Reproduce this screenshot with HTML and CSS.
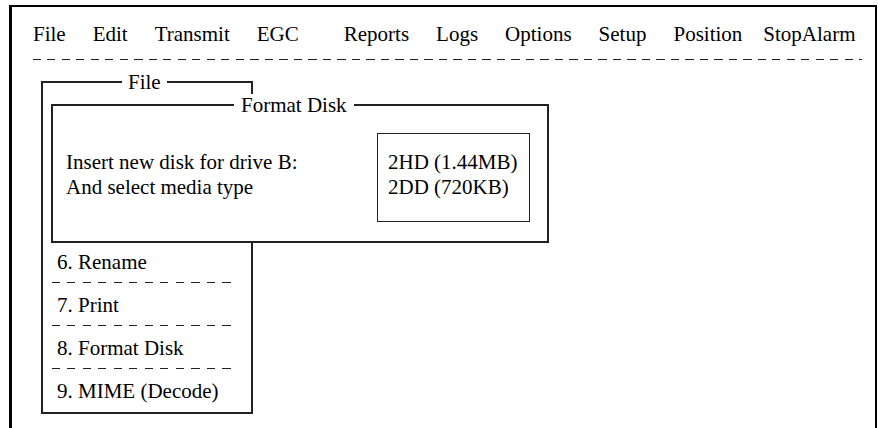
FILE: index.html
```html
<!DOCTYPE html>
<html lang="en">
<head>
    <meta charset="UTF-8">
    <title>Format Disk</title>
    <link rel="stylesheet" href="styles.css">
</head>
<body>
    <div class="screen">
        <div class="menubar">
            <span>File</span>
            <span>Edit</span>
            <span>Transmit</span>
            <span>EGC</span>
            <span class="spaced">Reports</span>
            <span>Logs</span>
            <span>Options</span>
            <span>Setup</span>
            <span>Position</span>
            <span class="tight">StopAlarm</span>
        </div>
        <div class="rule"></div>

        <div class="workspace">
            <!-- menu File, items 1-5 sit under the dialog -->
            <fieldset class="file-menu">
                <legend>File</legend>
                <ul class="file-list">
                    <li>6. Rename</li>
                    <li>7. Print</li>
                    <li>8. Format Disk</li>
                    <li>9. MIME (Decode)</li>
                </ul>
            </fieldset>

            <fieldset class="dialog">
                <legend>Format Disk</legend>
                <div class="dialog-body">
                    <p class="prompt">Insert new disk for drive B:<br>And select media type</p>
                    <div class="media">
                        <div>2HD (1.44MB)</div>
                        <div>2DD (720KB)</div>
                    </div>
                </div>
            </fieldset>
        </div>
    </div>
</body>
</html>
```

FILE: styles.css
```css
body {
    margin: 0;
    height: 428px;
    overflow: hidden;
    background: #fff;
    color: #000;
    font-family: "Liberation Serif", "DejaVu Serif", "Times New Roman", serif;
    font-size: 21px;
}

.screen {
    margin: 5px 1px 0 9px;
    height: 440px;
    border-top: 2px solid #000;
    border-left: 3px solid #000;
    border-right: 2px solid #000;
}

.menubar {
    display: flex;
    gap: 27px;
    padding: 15px 0 13px 21px;
    line-height: 24px;
    white-space: nowrap;
}

.menubar .spaced {
    margin-left: 18px;
}

.menubar .tight {
    margin-left: -6px;
}

.rule {
    height: 1px;
    margin: 0 13px 0 21px;
    background: repeating-linear-gradient(to right, #222 0 8px, transparent 8px 14.5px);
}

.workspace {
    position: relative;
    padding-top: 11px;
}

fieldset {
    margin: 0;
    min-width: 0;
    border: 2px solid #222;
    box-sizing: border-box;
    font: inherit;
}

legend {
    line-height: 22px;
    background: #fff;
}

.file-menu {
    width: 212px;
    margin-left: 29px;
    padding: 0 15px 0 9px;
}

.file-menu legend {
    margin-left: 70px;
    padding: 0 6px;
}

.file-list {
    list-style: none;
    margin: 147px 0 0;
    padding: 0;
}

.file-list li {
    padding: 11px 0 10px 5px;
    line-height: 22px;
    background: repeating-linear-gradient(to right, #222 0 8px, transparent 8px 15.5px) left bottom / 100% 1px no-repeat;
}

.file-list li:last-child {
    background: none;
}

.dialog {
    position: absolute;
    left: 39px;
    top: 34px;
    width: 498px;
    padding: 0 17px 0 13px;
    background: #fff;
}

.dialog legend {
    margin-left: 168px;
    padding: 0 7px;
}

.dialog-body {
    display: flex;
    justify-content: space-between;
    align-items: flex-start;
}

.prompt {
    margin: 0;
    padding-top: 34px;
    line-height: 25px;
}

.media {
    width: 153px;
    box-sizing: border-box;
    margin: 17px 0 19px;
    padding: 16px 10px 21px;
    border: 1px solid #222;
    line-height: 25px;
}
```
